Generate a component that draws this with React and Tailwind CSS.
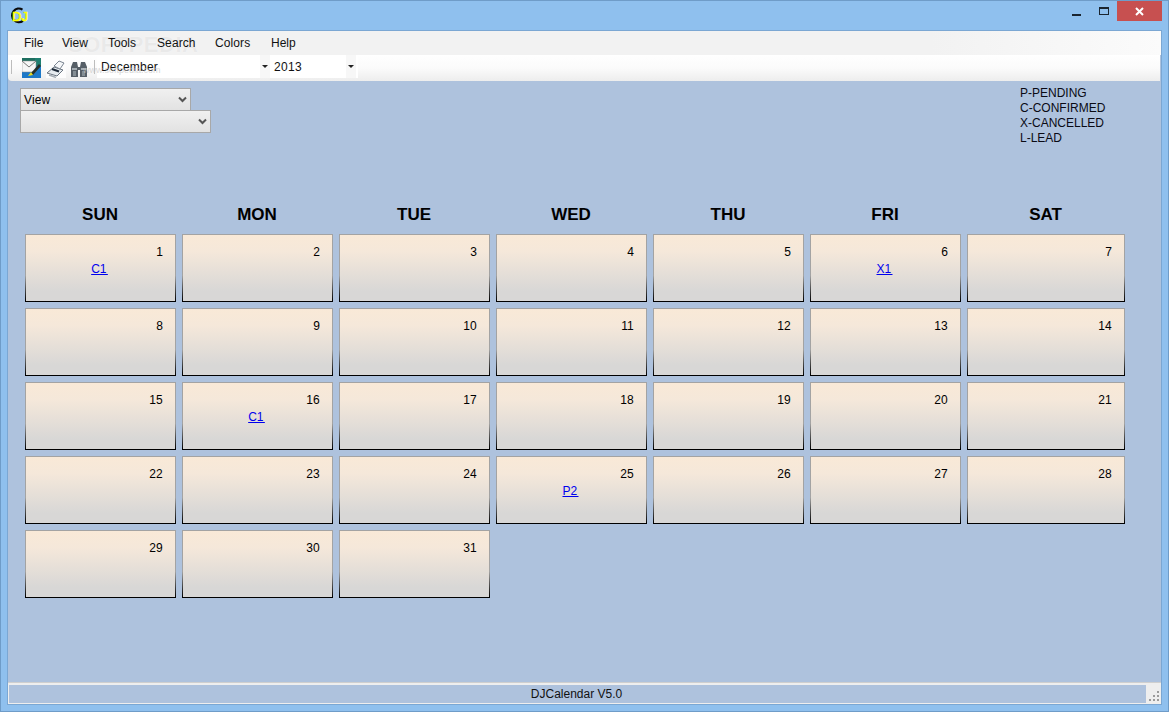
const DAYS = ["SUN","MON","TUE","WED","THU","FRI","SAT"];
const LINKS = {1:"C1",6:"X1",16:"C1",25:"P2"};
const F = "font-['Liberation_Sans',Arial,sans-serif]";

function Cell({n}) {
  return (
    <div className="h-[68px] p-px bg-[linear-gradient(to_bottom,#a3a3a3_0%,#a3a3a3_62%,#000_100%)] border-b border-black">
      <div className="h-[66px] bg-[linear-gradient(to_bottom,#f9e9d7_0%,#f5e8da_25%,#d8d7d6_85%,#d8d7d6_100%)] flex flex-col">
        <div className="h-[15px] mt-[10px] pr-[12px] text-right text-[12px] leading-[15px] text-black tracking-[0.2px]">{n}</div>
        <div className="h-[15px] mt-[2px] text-center text-[12px] leading-[15px]">
          {LINKS[n] && <a className="inline-block mr-[2px] text-[#0000ee] underline whitespace-pre [word-spacing:-2px]">{LINKS[n]+" "}</a>}
        </div>
      </div>
    </div>
  );
}

function Caret() {
  return <div className="w-0 h-0 border-l-[3px] border-r-[3px] border-t-[3px] border-l-transparent border-r-transparent border-t-[#222]" />;
}

function Chevron() {
  return (
    <svg width="9" height="7" viewBox="0 0 9 7" fill="none">
      <path d="M1 1.5 L4.5 5 L8 1.5" stroke="#555" strokeWidth="2" />
    </svg>
  );
}

function Select({w, label, cls}) {
  return (
    <div className={`${w} ${cls} h-[23px] border border-[#a8a8a8] bg-[linear-gradient(to_bottom,#f0f0f0,#e2e2e2)] flex items-center pl-[3px] pr-[3px] justify-between text-[12px] text-black`}>
      <span className="tracking-[0.1px]">{label}</span>
      <Chevron />
    </div>
  );
}

export default function App() {
  return (
    <div className={`${F} w-[1169px] h-[712px] overflow-hidden bg-[#8fc0ee] border border-[#6f9cc8] flex flex-col relative text-black`}>
      {/* title bar */}
      <div className="h-[29px] flex shrink-0 relative">
        <svg className="ml-[8px] mt-[6px]" width="20" height="18" viewBox="0 0 20 18">
          <path d="M13.5 2.6 A6.8 6.8 0 1 0 14 13.8" fill="none" stroke="#0a0a0a" strokeWidth="2.2" />
          <text x="3" y="13.5" fontSize="13" fill="#ffff00" stroke="#ffff00" strokeWidth="0.7" fontFamily="Liberation Sans">DJ</text>
        </svg>
        <div className="ml-auto flex items-start">
          <div className="w-[9px] h-[2px] bg-[#1a2530] mt-[13px] mr-[18px]" />
          <div className="w-[10px] h-[8px] border border-[#1a2530] border-t-2 mt-[6px] mr-[8px]" />
          <div className="w-[45px] h-[20px] bg-[#c75050] flex items-center justify-center mr-[6px]">
            <svg width="9" height="9" viewBox="0 0 9 9"><path d="M1 1 L8 8 M8 1 L1 8" stroke="#fff" strokeWidth="2" /></svg>
          </div>
        </div>
      </div>
      {/* client */}
      <div className="mx-[6px] h-[675px] border border-[#7ba7d3] bg-[#aec2dd] flex flex-col relative">
        <div className="h-[24px] shrink-0 bg-[linear-gradient(to_right,#f2f2f2_0%,#f2f2f2_80%,#fbfbfb_100%)] flex items-center pl-[16px] text-[12px] leading-[24px] text-[#111] relative">
          <div className="absolute left-[60px] top-[4px] text-[22px] leading-[20px] font-bold tracking-[0.5px] text-[#e9e9e9] [text-shadow:0_0_1px_#ffffff] pointer-events-none">SOFTPEDIA</div>
          <span className="w-[38px] relative">File</span>
          <span className="w-[46px] relative">View</span>
          <span className="w-[49px] relative">Tools</span>
          <span className="w-[58px] relative tracking-[0.1px]">Search</span>
          <span className="w-[56px] relative tracking-[0.1px]">Colors</span>
          <span className="relative">Help</span>
        </div>
        <div className="h-[26px] shrink-0 mr-px rounded-bl-[4px] bg-[linear-gradient(to_bottom,#ffffff_0%,#fbfbfb_50%,#ededed_100%)] flex items-start pl-[3px] relative">
          <div className="w-px h-[14px] bg-[#bdbdbd] mt-[5px]" />
          <svg className="ml-[10px] mt-[3px]" width="19" height="20" viewBox="0 0 19 20">
            <rect width="19" height="20" fill="#1c78c8" />
            <rect y="0" width="19" height="3" fill="#1f6f60" />
            <rect x="13" y="0" width="6" height="8" fill="#1f7f70" />
            <path d="M0 3 L14 3 L14 14 L0 14Z" fill="#f6f6f6" stroke="#888" strokeWidth="0.5" />
            <path d="M0 3 L7 9 L14 3" fill="none" stroke="#777" />
            <path d="M9 15 L17 6 L19 8 L11 17Z" fill="#26302a" />
            <path d="M6 18 L9 14 L11 17Z" fill="#e8d820" />
          </svg>
          <svg className="ml-[5px] mt-[5px] bg-[#fdfdfd]" width="20" height="18" viewBox="0 0 20 18">
            <path d="M1 13 L8 7 L17 10 L11 16 Z" fill="#e6ebef" stroke="#6a7480" strokeWidth="1" />
            <path d="M8 6 L13 1 L18 3 L14 9Z" fill="#f6f8fa" stroke="#7a8490" strokeWidth="1" />
            <path d="M6 9 L13 11.5" stroke="#1e2a38" strokeWidth="2" />
            <path d="M3 15 L10 17.5" stroke="#a5adb5" strokeWidth="1.5" />
          </svg>
          <svg className="ml-[4px] mt-[7px]" width="18" height="15" viewBox="0 0 18 15">
            <path d="M1 5 L3 0 L7 0 L8 5 L10 5 L11 0 L15 0 L17 5 L17 15 L10 15 L10 8 L8 8 L8 15 L1 15Z" fill="#565f67" />
            <rect x="2" y="6" width="5" height="2" fill="#a6aeb4" />
            <rect x="11" y="6" width="5" height="2" fill="#a6aeb4" />
            <rect x="3" y="9" width="3" height="5" fill="#848e94" />
            <rect x="12" y="9" width="3" height="5" fill="#848e94" />
          </svg>
          <div className="w-px h-[14px] bg-[#bdbdbd] ml-[6px] mt-[5px]" />
          <div className="ml-[2px] w-[163px] h-[23px] bg-white flex items-center pl-[4px] text-[12px] text-[#111] tracking-[0.2px]">December</div>
          <div className="w-[10px] h-[23px] bg-[#f7f7f7] flex items-center justify-center"><Caret /></div>
          <div className="w-[88px] h-[23px] bg-white flex items-center pl-[4px] justify-between text-[12px] text-[#111]">
            <span className="tracking-[0.3px]">2013</span>
            <div className="w-[10px] h-[23px] bg-[#f7f7f7] flex items-center justify-center mr-[2px]"><Caret /></div>
          </div>
          <div className="flex-1" />
        </div>
        <div className="absolute left-[75px] top-[33px] text-[9px] leading-[12px] text-[#c6c6c6]/70 pointer-events-none">www.softpedia.com</div>

        {/* controls row */}
        <div className="h-[123px] shrink-0 flex justify-between pl-[12px]">
          <div className="flex flex-col pt-[7px]">
            <Select w="w-[171px]" label="View" cls="" />
            <Select w="w-[191px]" label="" cls="-mt-px" />
          </div>
          <div className="mr-[41px] w-[100px] text-[12px] leading-[15px] pt-[5px] text-[#0a0a14]">
            <div>P-PENDING</div><div>C-CONFIRMED</div><div>X-CANCELLED</div><div>L-LEAD</div>
          </div>
        </div>
        {/* calendar */}
        <div className="pl-[17px] grid grid-cols-[151px_151px_151px_151px_151px_151px_158px] gap-x-[6px] gap-y-[6px] flex-1 content-start">
          {DAYS.map(d => (
            <div key={d} className="h-[20px] mb-[4px] pr-[1px] text-center text-[17px] leading-[22px] font-bold text-black">{d}</div>
          ))}
          {Array.from({length:31},(_,i)=>i+1).map(n => <Cell key={n} n={n} />)}
        </div>
        {/* status */}
        <div className="h-[22px] shrink-0 border-t border-[#cfcfcf] bg-[#eeeeee] flex pt-[2px] pb-[1px] pl-px">
          <div className="flex-1 bg-[#aec2dd] pr-[2px] text-center text-[12px] leading-[19px] h-[18px] text-[#111]">DJCalendar V5.0</div>
          <div className="w-[15px] relative">
            <svg className="absolute right-[1px] bottom-[1px]" width="11" height="11" viewBox="0 0 11 11" fill="#9a9a9a">
              <rect x="8" y="0" width="2" height="2" />
              <rect x="4" y="4" width="2" height="2" /><rect x="8" y="4" width="2" height="2" />
              <rect x="0" y="8" width="2" height="2" /><rect x="4" y="8" width="2" height="2" /><rect x="8" y="8" width="2" height="2" />
            </svg>
          </div>
        </div>
      </div>
    </div>
  );
}
